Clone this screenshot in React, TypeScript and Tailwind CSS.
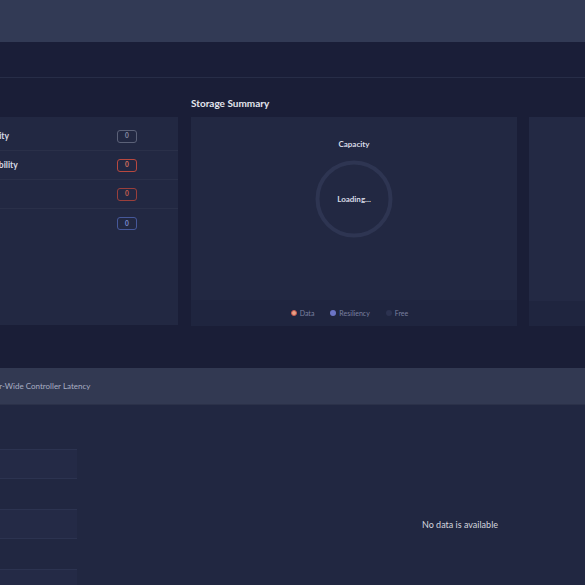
import React from 'react'

const rows = [
    { label: 'Capacity', tone: 'border-[#5b6178] text-[#8a90a6]' },
    { label: 'Availability', tone: 'border-[#b8483f] text-[#d9735f]' },
    { label: 'Risk', tone: 'border-[#9a3f3b] text-[#c9604f]' },
    { label: 'Info', tone: 'border-[#46589a] text-[#7b8fd4]' },
]

function Legend() {
    return (
        <div className="h-[26px] bg-[#1f253f] flex items-center justify-center gap-[16px] pr-[9px] text-[7px] text-[#7a80a0]">
            <div className="flex items-center gap-[3px]">
                <span className="w-[6px] h-[6px] rounded-full bg-[#e6a185] border border-[#c9564d]" />
                <span>Data</span>
            </div>
            <div className="flex items-center gap-[3px]">
                <span className="w-[6px] h-[6px] rounded-full bg-[#6b74c6]" />
                <span>Resiliency</span>
            </div>
            <div className="flex items-center gap-[3px]">
                <span className="w-[6px] h-[6px] rounded-full bg-[#2c3250]" />
                <span>Free</span>
            </div>
        </div>
    )
}

export default function App() {
    return (
        <div className="w-[585px] h-[585px] overflow-hidden bg-[#1a1e37] font-['Lato','Noto_Sans',sans-serif]">
            <div className="h-[42px] bg-[#323a55]" />
            <div className="h-[36px] bg-[#1a1e38] border-b border-[#272d47]" />

            {/* Summary cards */}
            <div className="flex items-start pt-[18px] gap-[13px]">
                <div className="shrink-0 flex flex-col ml-[-40px]">
                    <div className="h-[14px] mb-[7px]" />
                    <div className="w-[218px] h-[208px] bg-[#222842] pt-[5px]">
                        {rows.map((r, i) => (
                            <div
                                key={r.label}
                                className={`h-[29px] flex items-center pl-[16px] pr-[41px] ${i < 3 ? 'border-b border-[#2a3049]' : ''}`}
                            >
                                <span className="flex-1 text-[8.5px] font-bold text-[#d8dbe5]">{r.label}</span>
                                <span className={`w-[20px] h-[13px] rounded-[3px] border flex items-center justify-center text-[6.5px] font-bold ${r.tone}`}>
                                    0
                                </span>
                            </div>
                        ))}
                    </div>
                </div>

                <div className="shrink-0 w-[326px] flex flex-col">
                    <div className="h-[14px] mb-[7px] leading-[14px] text-[10px] font-bold text-[#e4e6ee]">Storage Summary</div>
                    <div className="h-[183px] bg-[#222842] flex flex-col items-center pt-[22px]">
                        <div className="h-[10px] leading-[10px] text-[8px] font-bold text-[#d8dbe5]">Capacity</div>
                        <div className="relative mt-[11px] w-[78px] h-[78px] flex items-center justify-center">
                            <svg width="78" height="78" viewBox="0 0 78 78" className="absolute inset-0">
                                <circle cx="39" cy="39" r="36.5" fill="none" stroke="#2e3552" strokeWidth="4" />
                            </svg>
                            <span className="relative text-[8px] font-bold text-[#d8dbe5]">Loading...</span>
                        </div>
                    </div>
                    <Legend />
                </div>

                <div className="shrink-0 w-[300px] flex flex-col ml-[-1px]">
                    <div className="h-[14px] mb-[7px]" />
                    <div className="h-[184px] bg-[#232944]" />
                    <div className="h-[25px] bg-[#1f253f]" />
                </div>
            </div>

            {/* Latency */}
            <div className="mt-[42px] h-[37px] bg-[#323952] border-b border-[#2b3149] flex items-center">
                <span className="ml-[-23px] text-[8px] text-[#a9aec4]">Cluster-Wide Controller Latency</span>
            </div>
            <div className="h-[200px] bg-[#212741] flex">
                <div className="shrink-0 w-[77px] pt-[44px] flex flex-col gap-[30px]">
                    <div className="h-[30px] bg-[#242a46] border-y border-[#2c3350]" />
                    <div className="h-[30px] bg-[#242a46] border-y border-[#2c3350]" />
                    <div className="h-[30px] bg-[#242a46] border-y border-[#2c3350]" />
                </div>
                <div className="shrink-0 w-[766px] flex justify-center pt-[114px]">
                    <span className="h-[12px] leading-[12px] text-[9px] text-[#d4d6df]">No data is available</span>
                </div>
            </div>
        </div>
    )
}
